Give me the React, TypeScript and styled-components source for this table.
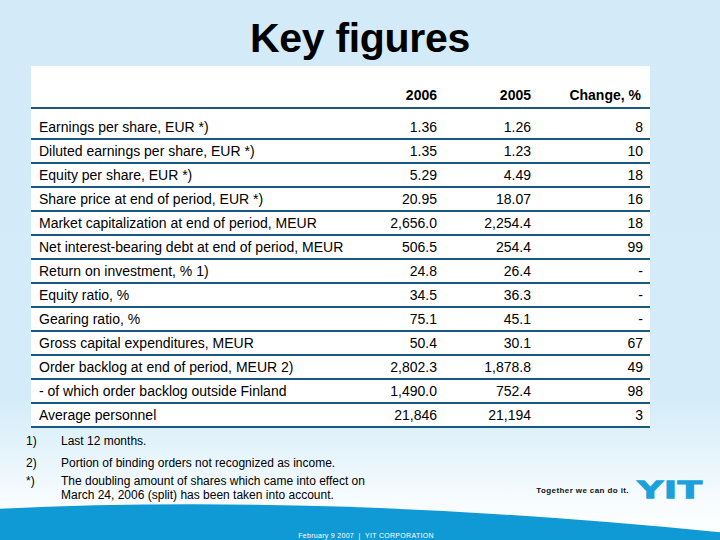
import React from 'react';
import styled, { createGlobalStyle } from 'styled-components';

const GlobalStyle = createGlobalStyle`
  html, body {
    margin: 0;
    padding: 0;
  }
  body {
    font-family: "Liberation Sans", Arial, sans-serif;
    color: #000;
  }
`;

const Page = styled.div`
  width: 720px;
  height: 540px;
  display: flex;
  flex-direction: column;
  overflow: hidden;
  background: linear-gradient(180deg, #d3ebf8 0%, #d4ecf9 74%, #e6f4fb 84%, #f8fcfe 93%, #ffffff 100%);
`;

const Title = styled.h1`
  margin: 0;
  height: 66px;
  line-height: 76px;
  text-align: center;
  font-size: 41px;
  font-weight: 700;
  letter-spacing: -0.3px;
  color: #000;
`;

const Table = styled.div`
  margin-left: 31px;
  width: 619px;
  background: #fff;
  display: flex;
  flex-direction: column;
`;

const Row = styled.div<{ $head?: boolean; $first?: boolean }>`
  display: grid;
  grid-template-columns: 316px 90px 94px 112px;
  padding-right: 7px;
  border-bottom: 2px solid #1b5a7e;
  height: ${({ $head }) => ($head ? '38px' : '22px')};
  align-items: ${({ $head }) => ($head ? 'end' : 'center')};
  padding-top: ${({ $first }) => ($first ? '7px' : '0')};
  padding-bottom: ${({ $head }) => ($head ? '3px' : '0')};
  box-sizing: content-box;
  font-size: 14px;
  line-height: 17px;
  font-weight: ${({ $head }) => ($head ? 700 : 400)};
`;

const Label = styled.div`
  padding-left: 8px;
  white-space: nowrap;
`;

const Num = styled.div<{ $shift?: number }>`
  text-align: right;
  white-space: nowrap;
  padding-right: ${({ $shift }) => $shift ?? 0}px;
`;

const Bottom = styled.div`
  height: 73px;
  display: flex;
  justify-content: space-between;
  align-items: flex-start;
`;

const Notes = styled.div`
  padding-top: 6px;
  padding-left: 26px;
  display: flex;
  flex-direction: column;
  font-size: 12px;
  line-height: 14px;
`;

const Note = styled.div<{ $gap?: number }>`
  display: flex;
  margin-top: ${({ $gap }) => $gap ?? 0}px;
`;

const Mark = styled.span`
  width: 35px;
  flex: none;
`;

const Logo = styled.div`
  display: flex;
  align-items: center;
  gap: 8px;
  margin-top: 52px;
  margin-right: 17px;
`;

const Slogan = styled.span`
  font-size: 8px;
  font-weight: 700;
  letter-spacing: 0.4px;
  color: #111;
`;

const Brand = styled.span`
  display: inline-block;
  font-size: 23px;
  line-height: 20px;
  font-weight: 700;
  color: #1aa0dc;
  -webkit-text-stroke: 1.4px #1aa0dc;
  letter-spacing: 1px;
  transform: scaleX(1.72);
  transform-origin: left center;
  width: 66px;
`;

const Footer = styled.div`
  position: relative;
  flex: 1;
  display: flex;
  align-items: flex-end;
  justify-content: center;
  padding-bottom: 1px;
`;

const Wave = styled.svg`
  position: absolute;
  inset: 0;
  width: 100%;
  height: 100%;
`;

const FooterText = styled.span`
  position: relative;
  font-size: 7px;
  letter-spacing: 0.3px;
  color: #fff;
  margin-left: 12px;
`;

const rows: [string, string, string, string][] = [
  ['Earnings per share, EUR *)', '1.36', '1.26', '8'],
  ['Diluted earnings per share, EUR *)', '1.35', '1.23', '10'],
  ['Equity per share, EUR *)', '5.29', '4.49', '18'],
  ['Share price at end of period, EUR *)', '20.95', '18.07', '16'],
  ['Market capitalization at end of period, MEUR', '2,656.0', '2,254.4', '18'],
  ['Net interest-bearing debt at end of period, MEUR', '506.5', '254.4', '99'],
  ['Return on investment, % 1)', '24.8', '26.4', '-'],
  ['Equity ratio, %', '34.5', '36.3', '-'],
  ['Gearing ratio, %', '75.1', '45.1', '-'],
  ['Gross capital expenditures, MEUR', '50.4', '30.1', '67'],
  ['Order backlog at end of period, MEUR 2)', '2,802.3', '1,878.8', '49'],
  ['- of which order backlog outside Finland', '1,490.0', '752.4', '98'],
  ['Average personnel', '21,846', '21,194', '3'],
];

export default function App() {
  return (
    <Page>
      <GlobalStyle />
      <Title>Key figures</Title>
      <Table>
        <Row $head>
          <Label />
          <Num $shift={-2}>2006</Num>
          <Num $shift={-3}>2005</Num>
          <Num $shift={2}>Change, %</Num>
        </Row>
        {rows.map(([label, a, b, c], i) => (
          <Row key={label} $first={i === 0}>
            <Label>{label}</Label>
            <Num>{a}</Num>
            <Num>{b}</Num>
            <Num>{c}</Num>
          </Row>
        ))}
      </Table>
      <Bottom>
        <Notes>
          <Note>
            <Mark>1)</Mark>
            <span>Last 12 months.</span>
          </Note>
          <Note $gap={8}>
            <Mark>2)</Mark>
            <span>Portion of binding orders not recognized as income.</span>
          </Note>
          <Note $gap={4}>
            <Mark>*)</Mark>
            <span>
              The doubling amount of shares which came into effect on
              <br />
              March 24, 2006 (split) has been taken into account.
            </span>
          </Note>
        </Notes>
        <Logo>
          <Slogan>Together we can do it.</Slogan>
          <Brand>YIT</Brand>
        </Logo>
      </Bottom>
      <Footer>
        <Wave viewBox="0 0 720 40" preserveAspectRatio="none">
          <path d="M0 8 Q 330 -8 720 32 L720 40 L0 40 Z" fill="#0f9ad5" />
        </Wave>
        <FooterText>February 9 2007 &nbsp;|&nbsp; YIT CORPORATION</FooterText>
      </Footer>
    </Page>
  );
}
